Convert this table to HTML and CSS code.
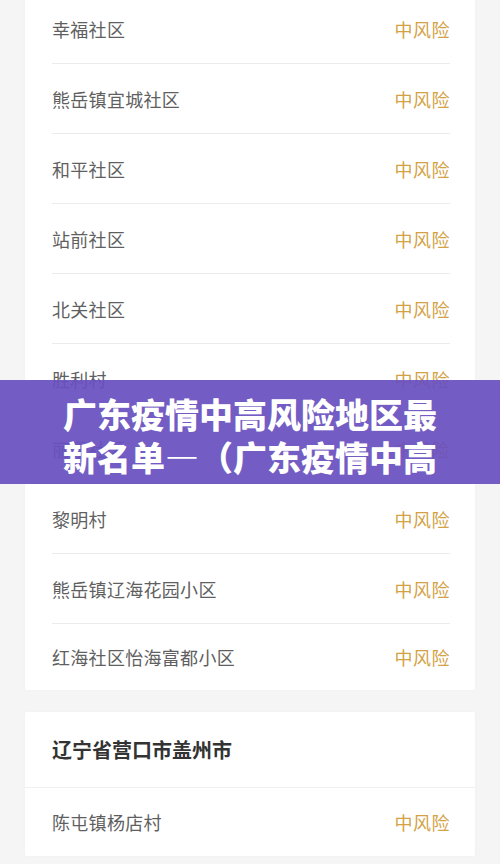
FILE: index.html
```html
<!DOCTYPE html>
<html lang="zh-CN">
<head>
<meta charset="utf-8">
<link rel="stylesheet" href="styles.css">
</head>
<body>
<div class="page">
  <div class="card first">
    <div class="row"><span class="name">幸福社区</span><span class="risk">中风险</span></div>
    <div class="row"><span class="name">熊岳镇宜城社区</span><span class="risk">中风险</span></div>
    <div class="row"><span class="name">和平社区</span><span class="risk">中风险</span></div>
    <div class="row"><span class="name">站前社区</span><span class="risk">中风险</span></div>
    <div class="row"><span class="name">北关社区</span><span class="risk">中风险</span></div>
    <div class="row"><span class="name">胜利村</span><span class="risk">中风险</span></div>
    <div class="row"><span class="name">丽景社区</span><span class="risk">中风险</span></div>
    <div class="row"><span class="name">黎明村</span><span class="risk">中风险</span></div>
    <div class="row"><span class="name">熊岳镇辽海花园小区</span><span class="risk">中风险</span></div>
    <div class="row last"><span class="name">红海社区怡海富都小区</span><span class="risk">中风险</span></div>
  </div>
  <div class="card second">
    <div class="head">辽宁省营口市盖州市</div>
    <div class="row last2"><span class="name">陈屯镇杨店村</span><span class="risk">中风险</span></div>
  </div>
</div>
<div class="banner"><h1 class="title">广东疫情中高风险地区最新名单—（广东疫情中高风险地区最新名单查询）</h1></div>
</body>
</html>
```
FILE: styles.css
```css
* { box-sizing: border-box; }
html, body {
  margin: 0;
  padding: 0;
  background: #f5f5f5;
  font-family: "Noto Sans CJK SC", "Noto Sans", sans-serif;
  overflow: hidden;
  height: 864px;
}
.page {
  padding: 0 25px;
  display: flex;
  flex-direction: column;
  gap: 22px;
}
.card {
  background: #ffffff;
  border-radius: 2px;
  box-shadow: 0 0 3px rgba(0,0,0,0.03);
}
.card.first { margin-top: -6px; }
.row {
  height: 70px;
  margin: 0 25px 0 27px;
  display: flex;
  align-items: center;
  justify-content: space-between;
  border-bottom: 1px solid #ececec;
}
.row.last { height: 66px; border-bottom: none; }
.row.last2 { height: 68px; border-bottom: none; }
.name {
  font-size: 18px;
  color: #5f5f5f;
  letter-spacing: 0.3px;
}
.risk {
  font-size: 18px;
  color: #d2a244;
  letter-spacing: 0.5px;
}
.head {
  height: 76px;
  padding: 0 25px 0 27px;
  display: flex;
  align-items: center;
  font-size: 20px;
  font-weight: 700;
  color: #333333;
  border-bottom: 1px solid #f0f0f0;
}
.banner {
  position: absolute;
  left: 0;
  top: 380px;
  width: 500px;
  height: 104px;
  background: rgba(104, 80, 190, 0.93);
  padding: 12px 63px 0 63px;
  overflow: hidden;
}
.title {
  margin: 0;
  font-size: 34px;
  line-height: 43px;
  font-weight: 900;
  color: #ffffff;
  height: 86px;
  overflow: hidden;
  word-break: break-all;
}
```
